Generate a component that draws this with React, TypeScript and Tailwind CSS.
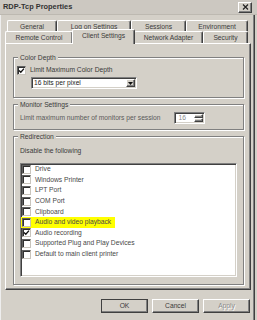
import React from "react";

const raised =
  "bg-[#d4d0c8] border border-t-white border-l-white border-r-[#404040] border-b-[#404040] shadow-[inset_-1px_-1px_#808080]";
const sunken =
  "bg-white border border-t-[#808080] border-l-[#808080] border-r-white border-b-white shadow-[inset_1px_1px_#404040,inset_-1px_-1px_#d4d0c8]";

function Check({ checked }: { checked?: boolean }) {
  return (
    <span className="w-[9px] h-[9px] shrink-0 bg-white border border-t-[#606060] border-l-[#606060] border-r-[#c8c4bc] border-b-[#c8c4bc] shadow-[inset_1px_1px_#303030] flex items-center justify-center">
      {checked && (
        <svg width="7" height="7" viewBox="0 0 7 7">
          <path d="M1 3.5 L2.8 5.3 L6 1.6" fill="none" stroke="#111" strokeWidth="1.3" />
        </svg>
      )}
    </span>
  );
}

function Tab({ label, w, selected }: { label: string; w: number; selected?: boolean }) {
  return (
    <div
      style={{ width: w }}
      className={
        "flex justify-center border-t border-l border-white border-r border-r-[#404040] shadow-[inset_-1px_0_#808080] rounded-t-[2px] bg-[#d4d0c8] " +
        (selected
          ? "relative z-10 h-[15px] -mb-px -mx-[1px] pt-[1px] items-start"
          : "h-full items-center")
      }
    >
      <span className="leading-[9px]">{label}</span>
    </div>
  );
}

function Group({ title, h, className, children }: { title: string; h: number; className?: string; children: React.ReactNode }) {
  return (
    <fieldset
      style={{ height: h }}
      className={"w-[231px] border border-[#808080] shadow-[inset_1px_1px_#fff,1px_1px_#fff] " + (className ?? "")}
    >
      <legend className="ml-[4px] px-[2px] leading-[9px] bg-[#d4d0c8]">{title}</legend>
      {children}
    </fieldset>
  );
}

const items: [string, boolean][] = [
  ["Drive", false],
  ["Windows Printer", false],
  ["LPT Port", false],
  ["COM Port", false],
  ["Clipboard", false],
  ["Audio and video playback", false],
  ["Audio recording", true],
  ["Supported Plug and Play Devices", false],
  ["Default to main client printer", false],
];

export default function App() {
  return (
    <div className="w-[257px] h-[320px] overflow-hidden bg-[#d4d0c8] font-['Liberation_Sans',Arial,sans-serif] text-[6.7px] text-[#3a3a3a] flex flex-col shadow-[inset_-2px_0_#d4d0c8,inset_-3px_0_#404040,inset_-4px_0_#808080,inset_1px_0_#eeeeee]">
      {/* title bar */}
      <div className="h-[15px] shrink-0 flex items-center justify-between pl-[3px] pr-[5px] bg-[#ccc8c1] border-b border-[#bdb9b1]">
        <span className="font-bold text-[7.4px] text-[#333] leading-none">RDP-Tcp Properties</span>
        <span className={raised + " w-[14px] h-[11px] flex items-center justify-center"}>
          <svg width="7" height="6" viewBox="0 0 7 6">
            <path d="M1 0.5 L6 5.5 M6 0.5 L1 5.5" stroke="#222" strokeWidth="1.2" />
          </svg>
        </span>
      </div>

      {/* tabs */}
      <div className="mt-[5px] ml-[7px] h-[11px] flex">
        <Tab label="General" w={50} />
        <Tab label="Log on Settings" w={74} />
        <Tab label="Sessions" w={55} />
        <Tab label="Environment" w={62} />
      </div>
      <div className="ml-[5px] h-[12px] flex items-end">
        <Tab label="Remote Control" w={68} />
        <Tab label="Client Settings" w={63} selected />
        <Tab label="Network Adapter" w={69} />
        <Tab label="Security" w={45} />
      </div>

      {/* tab page */}
      <div className="ml-[5px] w-[246px] h-[247px] shrink-0 border border-t-white border-l-white border-r-[#404040] border-b-[#404040] shadow-[inset_-1px_-1px_#808080] pt-[9px] pl-[7px] flex flex-col">
        <Group title="Color Depth" h={45}>
          <div className="mt-[3px] h-[10px] pl-[3px] flex items-center gap-[4px]">
            <Check checked />
            <span>Limit Maximum Color Depth</span>
          </div>
          <div className={sunken + " mt-[2px] ml-[17px] w-[106px] h-[12px] flex items-center justify-between pl-[2px] pr-[1px]"}>
            <span className="text-[#222]">16 bits per pixel</span>
            <span className={raised + " w-[9px] h-[8px] flex items-center justify-center"}>
              <svg width="5" height="3" viewBox="0 0 5 3">
                <path d="M0 0 H5 L2.5 3 Z" fill="#111" />
              </svg>
            </span>
          </div>
        </Group>

        <Group title="Monitor Settings" h={30} className="mt-[2px]">
          <div className="mt-[3px] h-[12px] pl-[6px] flex items-center gap-[14px]">
            <span className="text-[#5a5a5a]">Limit maximum number of monitors per session</span>
            <div className={sunken + " w-[31px] h-[12px] flex items-center justify-between pl-[3px] pr-[1px]"}>
              <span className="text-[#8a8a8a]">16</span>
              <div className="flex flex-col">
                <span className={raised + " w-[9px] h-[4px]"} />
                <span className={raised + " w-[9px] h-[4px]"} />
              </div>
            </div>
          </div>
        </Group>

        <Group title="Redirection" h={153} className="mt-[2px]">
          <div className="mt-[6px] h-[9px] pl-[6px] flex items-center">Disable the following</div>
          <div className={sunken + " mt-[7px] ml-[6px] w-[217px] h-[114px] flex flex-col"}>
            {items.map(([label, checked]) => {
              const hl = label === "Audio and video playback";
              return (
                <div key={label} className="h-[10.6px] flex items-center">
                  <div className={"h-full flex items-center gap-[4px] pl-[1px] pr-[4px] " + (hl ? "bg-[#ffff00]" : "")}>
                    <Check checked={checked} />
                    <span className="text-[#484848]">{label}</span>
                  </div>
                </div>
              );
            })}
          </div>
        </Group>
      </div>

      {/* buttons */}
      <div className="mt-[9px] pr-[7px] flex justify-end gap-[4px]">
        <button className={raised + " w-[47px] h-[14px] outline outline-1 outline-[#404040] -outline-offset-1 flex items-center justify-center"}>OK</button>
        <button className={raised + " w-[47px] h-[14px] flex items-center justify-center"}>Cancel</button>
        <button className={raised + " w-[47px] h-[14px] flex items-center justify-center text-[#8a8a8a] [text-shadow:1px_1px_0_#fff]"}>Apply</button>
      </div>
    </div>
  );
}
